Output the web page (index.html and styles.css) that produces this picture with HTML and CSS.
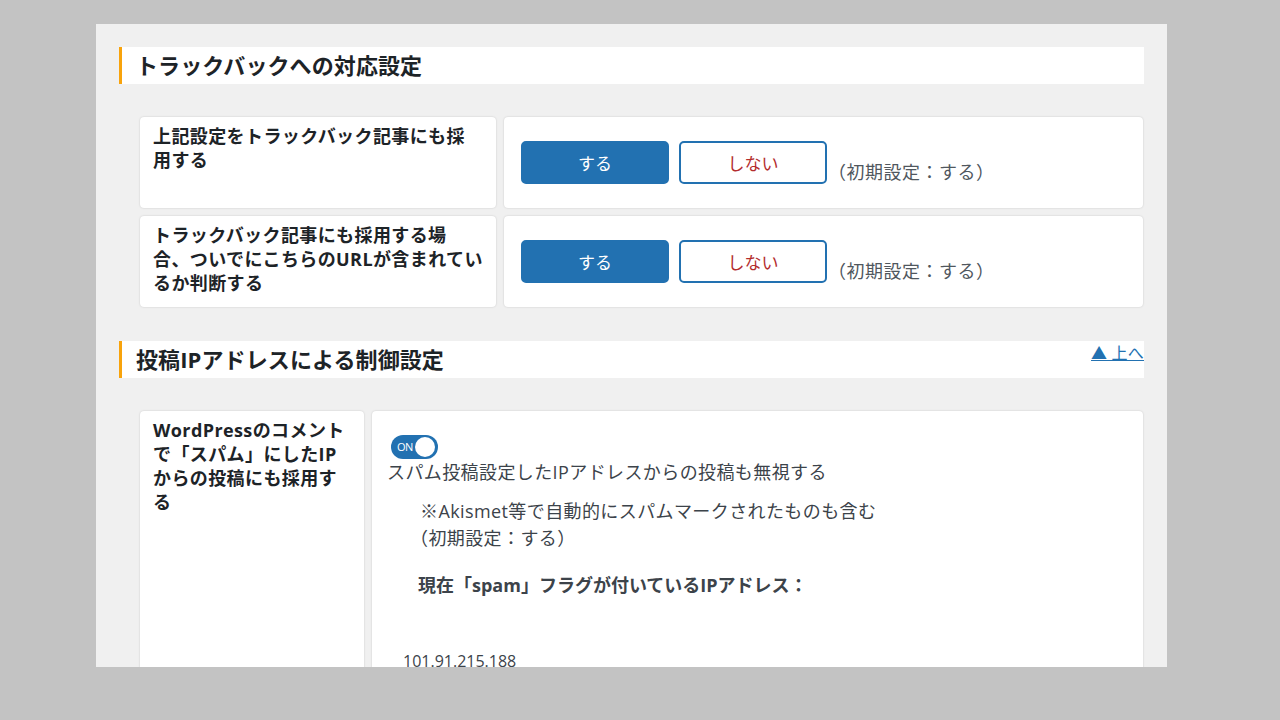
FILE: index.html
```html
<!DOCTYPE html>
<html lang="ja">
<head>
<meta charset="utf-8">
<title>トラックバック設定</title>
<link rel="stylesheet" href="styles.css">
</head>
<body>
<div class="frame">
  <section class="section">
    <h2 class="section-title">トラックバックへの対応設定</h2>
    <div class="settings settings-wide">
      <div class="card label">上記設定をトラックバック記事にも採用する</div>
      <div class="card control">
        <button class="btn btn-on">する</button>
        <button class="btn btn-off">しない</button>
        <span class="default-note">（初期設定：する）</span>
      </div>
      <div class="card label">トラックバック記事にも採用する場合、ついでにこちらのURLが含まれているか判断する</div>
      <div class="card control">
        <button class="btn btn-on">する</button>
        <button class="btn btn-off">しない</button>
        <span class="default-note">（初期設定：する）</span>
      </div>
    </div>
  </section>
  <section class="section">
    <h2 class="section-title">投稿IPアドレスによる制御設定<a class="to-top" href="#">▲ 上へ</a></h2>
    <div class="settings settings-narrow">
      <div class="card label">WordPressのコメントで「スパム」にしたIPからの投稿にも採用する</div>
      <div class="card detail">
        <div class="toggle"><span class="toggle-text">ON</span><span class="toggle-knob"></span></div>
        <p class="opt-text">スパム投稿設定したIPアドレスからの投稿も無視する</p>
        <div class="sub-note">※Akismet等で自動的にスパムマークされたものも含む<span class="sub-default">（初期設定：する）</span></div>
        <p class="current-label">現在「spam」フラグが付いているIPアドレス：</p>
        <ul class="ip-list"><li>101.91.215.188</li></ul>
      </div>
    </div>
  </section>
</div>
</body>
</html>
```
FILE: styles.css
```css
html, body {
  margin: 0;
  padding: 0;
  background: #c3c3c3;
  height: 100%;
}
body {
  font-family: "Open Sans", "Noto Sans CJK JP", sans-serif;
  color: #1d2327;
}
.frame {
  margin: 24px 0 0 96px;
  width: 1071px;
  height: 643px;
  box-sizing: border-box;
  overflow: hidden;
  background: #f0f0f0;
  padding: 23px 23px 0 23px;
}
.section-title {
  position: relative;
  margin: 0;
  height: 37px;
  line-height: 37px;
  background: #fff;
  border-left: 3px solid #f8a30c;
  padding-left: 14px;
  font-size: 22px;
  font-weight: 700;
  letter-spacing: 0.1px;
  color: #1d2327;
}
.to-top {
  position: absolute;
  right: 0;
  top: 2px;
  line-height: 20px;
  font-size: 16px;
  font-weight: 400;
  letter-spacing: 0.2px;
  color: #2271b1;
  text-decoration: underline;
}
.settings {
  display: grid;
  gap: 8px;
  margin: 33px 1px 34px 21px;
}
.settings-wide { grid-template-columns: 356px 1fr; }
.settings-narrow { grid-template-columns: 224px 1fr; }
.card {
  background: #fff;
  border-radius: 4px;
  box-shadow: 0 0 2px rgba(0,0,0,0.18);
}
.label {
  padding: 7px 13px;
  font-size: 18px;
  font-weight: 700;
  line-height: 24px;
  letter-spacing: 0.4px;
}
.control {
  display: flex;
  align-items: center;
  gap: 10px;
  padding: 24px 17px 24px;
}
.btn {
  width: 148px;
  height: 43px;
  border-radius: 5px;
  font-family: inherit;
  font-size: 17px;
  box-sizing: border-box;
  cursor: pointer;
}
.btn-on {
  background: #2271b1;
  color: #fff;
  border: 2px solid #2271b1;
}
.btn-off {
  background: #fff;
  color: #b32d2e;
  border: 2px solid #2271b1;
}
.default-note {
  margin: 19px 0 0 -9px;
  font-size: 18px;
  line-height: 20px;
  letter-spacing: 0.5px;
  color: #50575e;
}
.detail {
  padding: 24px 15px 0;
  font-size: 18px;
  letter-spacing: 0.4px;
  color: #3c434a;
}
.toggle {
  position: relative;
  width: 47px;
  height: 24px;
  margin-left: 4px;
  border-radius: 12px;
  background: #2271b1;
}
.toggle-text {
  position: absolute;
  left: 6px;
  top: 0;
  line-height: 23px;
  font-size: 11px;
  letter-spacing: -0.6px;
  color: #fff;
}
.toggle-knob {
  position: absolute;
  right: 3px;
  top: 2px;
  width: 20px;
  height: 20px;
  border-radius: 50%;
  background: #fff;
}
.opt-text {
  margin: 0;
  line-height: 27px;
}
.sub-note {
  margin: 12px 0 0 33px;
  line-height: 27px;
}
.sub-default {
  display: block;
  margin-left: -10px;
}
.current-label {
  margin: 20px 0 0 31px;
  line-height: 27px;
  font-weight: 700;
  letter-spacing: 0;
}
.ip-list {
  list-style: none;
  margin: 50px 0 0 16px;
  padding: 0;
  font-size: 16px;
  font-weight: 500;
  letter-spacing: 0;
  line-height: 24px;
}
```
